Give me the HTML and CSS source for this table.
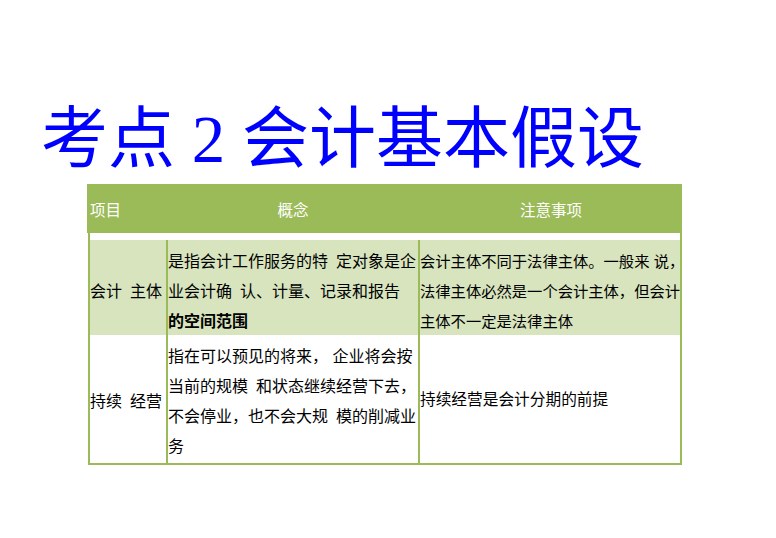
FILE: index.html
```html
<!DOCTYPE html>
<html lang="zh-CN">
<head>
<meta charset="utf-8">
<title>考点 2 会计基本假设</title>
<link rel="stylesheet" href="styles.css">
</head>
<body>
<div class="page">
  <h1 class="title">考点 2 会计基本假设</h1>
  <div class="table">
    <div class="thead">
      <div class="th th-item">项目</div>
      <div class="th">概念</div>
      <div class="th">注意事项</div>
    </div>
    <div class="tbody">
      <div class="rows">
        <div class="row row-shaded">
          <div class="cell c1"><div class="txt">会计&ensp;主体</div></div>
          <div class="cell c2"><div class="txt">是指会计工作服务的特&ensp;定对象是企<br>业会计确&ensp;认、计量、记录和报告<br><b>的空间范围</b></div></div>
          <div class="cell c3 small"><div class="txt">会计主体不同于法律主体。一般来 说，<br>法律主体必然是一个会计主体，但会计<br>主体不一定是法律主体</div></div>
        </div>
        <div class="row row-plain">
          <div class="cell c1"><div class="txt">持续&ensp;经营</div></div>
          <div class="cell c2"><div class="txt">指在可以预见的将来， 企业将会按<br>当前的规模&ensp;和状态继续经营下去，<br>不会停业，也不会大规&ensp;模的削减业<br>务</div></div>
          <div class="cell c3 mid"><div class="txt">持续经营是会计分期的前提</div></div>
        </div>
      </div>
    </div>
  </div>
</div>
</body>
</html>
```

FILE: styles.css
```css
html, body {
  margin: 0;
  padding: 0;
  background: #ffffff;
}

.page {
  padding-top: 106px;
}

.title {
  margin: 0 0 0 41px;
  height: 67px;
  font-family: "Liberation Serif", "Noto Sans CJK SC", serif;
  font-weight: normal;
  font-size: 67px;
  line-height: 67px;
  color: #0000ff;
  white-space: nowrap;
}

.table {
  margin: 11px 0 0 87px;
  width: 595px;
  font-family: "Liberation Sans", "Noto Sans CJK SC", sans-serif;
  color: #000000;
}

.thead {
  display: grid;
  grid-template-columns: 79px 254px 262px;
  align-items: center;
  height: 49px;
  background: #9bbb59;
  color: #ffffff;
  font-size: 15.5px;
}

.th {
  text-align: center;
}

.th-item {
  text-align: left;
  padding-left: 3px;
}

.tbody {
  margin-left: 1px;
  padding-top: 7px;
  background: #ffffff;
  border: 2px solid #9bbb59;
  border-top: 0;
}

.rows {
  display: grid;
  row-gap: 2px;
  background: #9bbb59;
}

.row {
  display: grid;
  grid-template-columns: 76px 250px 260px;
  column-gap: 2px;
}

.row-shaded {
  height: 93px;
}

.row-plain {
  height: 128px;
}

.cell {
  display: flex;
  align-items: center;
  box-sizing: border-box;
  padding-top: 7px;
  font-size: 16px;
  line-height: 30px;
  white-space: nowrap;
}

.txt {
  display: block;
}

.row-shaded .cell {
  background: #d7e4bd;
}

.row-plain .cell {
  background: #ffffff;
  padding-top: 6px;
}

.cell.small {
  font-size: 15.3px;
}

.row-plain .cell.mid {
  font-size: 15.7px;
  padding-top: 1px;
}

.cell b {
  font-weight: bold;
}
```
